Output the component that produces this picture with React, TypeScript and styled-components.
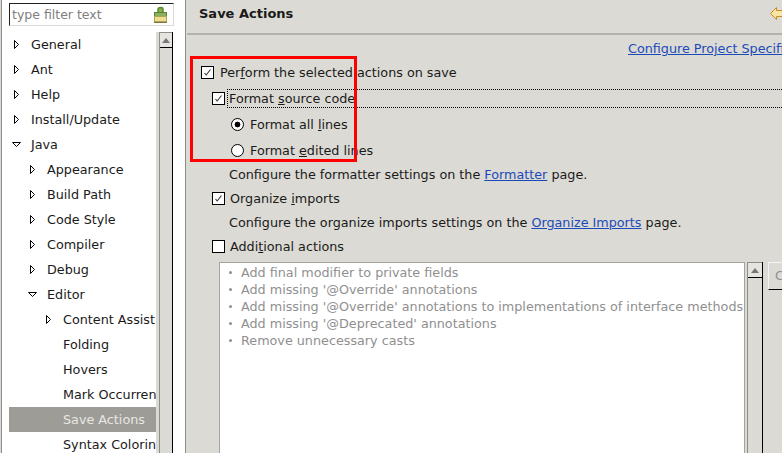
import styled, { createGlobalStyle } from 'styled-components';

const TREE_ITEMS: { label: string; level: number; arrow?: 'closed' | 'open'; selected?: boolean }[] = [
  { label: 'General', level: 0, arrow: 'closed' },
  { label: 'Ant', level: 0, arrow: 'closed' },
  { label: 'Help', level: 0, arrow: 'closed' },
  { label: 'Install/Update', level: 0, arrow: 'closed' },
  { label: 'Java', level: 0, arrow: 'open' },
  { label: 'Appearance', level: 1, arrow: 'closed' },
  { label: 'Build Path', level: 1, arrow: 'closed' },
  { label: 'Code Style', level: 1, arrow: 'closed' },
  { label: 'Compiler', level: 1, arrow: 'closed' },
  { label: 'Debug', level: 1, arrow: 'closed' },
  { label: 'Editor', level: 1, arrow: 'open' },
  { label: 'Content Assist', level: 2, arrow: 'closed' },
  { label: 'Folding', level: 2 },
  { label: 'Hovers', level: 2 },
  { label: 'Mark Occurrences', level: 2 },
  { label: 'Save Actions', level: 2, selected: true },
  { label: 'Syntax Coloring', level: 2 },
];

const ACTIONS = [
  'Add final modifier to private fields',
  "Add missing '@Override' annotations",
  "Add missing '@Override' annotations to implementations of interface methods",
  "Add missing '@Deprecated' annotations",
  'Remove unnecessary casts',
];

function TreeArrow({ open }: { open: boolean }) {
  return (
    <ArrowSvg width="10" height="10" viewBox="0 0 10 10">
      {open ? (
        <path d="M0.5 2.5H8.5L4.5 6.5Z" fill="#fff" stroke="#000" />
      ) : (
        <path d="M2.5 0.5V8.5L6.5 4.5Z" fill="#fff" stroke="#000" />
      )}
    </ArrowSvg>
  );
}

function Check() {
  return (
    <CheckBox>
      <svg width="9" height="9" viewBox="0 0 9 9">
        <path d="M1.5 5L3.2 7L7.5 1.5" fill="none" stroke="#333" strokeWidth="1.1" />
      </svg>
    </CheckBox>
  );
}

function ScrollBar() {
  return (
    <ScrollTrack>
      <ScrollButton>
        <svg width="8" height="5" viewBox="0 0 8 5">
          <path d="M0 5L4 0L8 5Z" fill="#777" />
        </svg>
      </ScrollButton>
    </ScrollTrack>
  );
}

export default function App() {
  return (
    <>
      <GlobalStyle />
      <Window>
        <Sidebar>
          <FilterBox>
            <FilterText>type filter text</FilterText>
            <svg width="15" height="18" viewBox="0 0 15 18">
              <path d="M5 6V3C5 1 10 1 10 3V6" fill="#8ab04f" stroke="#4f8a22" strokeWidth="1.4" />
              <rect x="1.5" y="6.5" width="12" height="4" fill="#8bb25a" stroke="#5e7d3a" />
              <rect x="1.5" y="10.5" width="12" height="5" fill="#efe08f" stroke="#b3a25c" />
              <path d="M1 16.5H14" stroke="#7c7440" />
            </svg>
          </FilterBox>
          <TreeArea>
            <TreeList>
              {TREE_ITEMS.map((item) => (
                <TreeRow key={item.label} $level={item.level} $selected={item.selected}>
                  <ArrowSlot>{item.arrow && <TreeArrow open={item.arrow === 'open'} />}</ArrowSlot>
                  {item.label}
                </TreeRow>
              ))}
            </TreeList>
            <SideScroll>
              <ScrollBar />
            </SideScroll>
          </TreeArea>
        </Sidebar>
        <Main>
          <Header>
            <Title>Save Actions</Title>
            <svg width="14" height="13" viewBox="0 0 14 13">
              <path d="M0.5 6.5L6.5 0.5V3.5H14V9.5H6.5V12.5Z" fill="#fbe3a4" stroke="#c98c22" />
            </svg>
          </Header>
          <Body>
            <ProjectLink>Configure Project Specific Settings...</ProjectLink>
            <TopRow>
              <Check />
              <span>
                Per<u>f</u>orm the selected actions on save
              </span>
            </TopRow>
            <NestedRow>
              <Check />
              <FocusLabel>
                Format <u>s</u>ource code
              </FocusLabel>
            </NestedRow>
            <RadioRow>
              <RadioDot $on />
              <span>
                Format all <u>l</u>ines
              </span>
            </RadioRow>
            <RadioRow>
              <RadioDot />
              <span>
                Format <u>e</u>dited lines
              </span>
            </RadioRow>
            <HintRow>
              Configure the formatter settings on the <PageLink>Formatter</PageLink> page.
            </HintRow>
            <NestedRow>
              <Check />
              <CheckLabel>
                Organize <u>i</u>mports
              </CheckLabel>
            </NestedRow>
            <HintRow>
              Configure the organize imports settings on the <PageLink>Organize Imports</PageLink> page.
            </HintRow>
            <NestedRow>
              <CheckBox />
              <CheckLabel>
                Addi<u>t</u>ional actions
              </CheckLabel>
            </NestedRow>
            <ActionsArea>
              <ActionsList>
                {ACTIONS.map((action) => (
                  <ActionItem key={action}>
                    <Bullet />
                    {action}
                  </ActionItem>
                ))}
              </ActionsList>
              <ListScroll>
                <ScrollBar />
              </ListScroll>
              <SideButton>C</SideButton>
            </ActionsArea>
          </Body>
        </Main>
        <Highlight />
      </Window>
    </>
  );
}

const GlobalStyle = createGlobalStyle`
  html, body {
    margin: 0;
    padding: 0;
    background: #dcdad5;
  }
`;

const Window = styled.div`
  position: relative;
  display: flex;
  width: 782px;
  height: 453px;
  overflow: hidden;
  background: #dcdad5;
  color: #1a1a1a;
  font-family: 'DejaVu Sans', sans-serif;
  font-size: 12.75px;
`;

const Sidebar = styled.div`
  display: flex;
  flex-direction: column;
  flex: none;
  width: 185px;
  margin-left: 1px;
  padding: 3px 0 0 7px;
  box-sizing: border-box;
  background: #fff;
  border-left: 1px solid #8f8d88;
  border-right: 1px solid #8f8d88;
`;

const FilterBox = styled.div`
  display: flex;
  align-items: center;
  justify-content: space-between;
  width: 165px;
  height: 23px;
  padding: 0 5px 0 2px;
  box-sizing: border-box;
  border: 1px solid #dcdad5;
  border-top: 1px solid #222;
  border-left: 1px solid #222;
`;

const FilterText = styled.span`
  color: #808080;
  font-size: 12.5px;
`;

const TreeArea = styled.div`
  display: flex;
  flex: 1;
  min-height: 0;
  margin-top: 6px;
  margin-right: 12px;
`;

const TreeList = styled.div`
  flex: 1;
  min-width: 0;
  overflow: hidden;
`;

const TreeRow = styled.div<{ $level: number; $selected?: boolean }>`
  display: flex;
  align-items: center;
  height: 25px;
  padding-left: ${(p) => p.$level * 16 + 3}px;
  white-space: nowrap;
  background: ${(p) => (p.$selected ? '#9d9c96' : 'transparent')};
  color: ${(p) => (p.$selected ? '#e8e7e3' : 'inherit')};
`;

const ArrowSlot = styled.span`
  display: flex;
  align-items: center;
  flex: none;
  width: 19px;
`;

const ArrowSvg = styled.svg`
  display: block;
`;

const SideScroll = styled.div`
  display: flex;
  flex: none;
  width: 17px;
  padding-left: 3px;
  box-sizing: border-box;
  background: #dcdad5;
`;

const ListScroll = styled.div`
  display: flex;
  flex: none;
  width: 16px;
  margin-left: 2px;
`;

const ScrollTrack = styled.div`
  flex: 1;
  background: #dcdad5;
  border-right: 1px solid #000;
  border-left: 1px solid #8f8d88;
`;

const ScrollButton = styled.div`
  display: flex;
  align-items: center;
  justify-content: center;
  height: 14px;
  border-top: 1px solid #8f8d88;
  border-bottom: 1px solid #000;
  background: #e6e4e0;
`;

const Main = styled.div`
  display: flex;
  flex-direction: column;
  flex: 1;
  min-width: 0;
  margin-left: 1px;
`;

const Header = styled.div`
  display: flex;
  align-items: center;
  justify-content: space-between;
  flex: none;
  height: 33px;
  padding: 0 0 6px 12px;
  box-sizing: border-box;
  margin-right: -2px;
`;

const Title = styled.h1`
  margin: 0;
  font-size: 13px;
  font-weight: 700;
`;

const Body = styled.div`
  flex: 1;
  min-height: 0;
  padding-left: 14px;
  border-top: 2px solid #b3b1ac;
`;

const ProjectLink = styled.a`
  display: block;
  height: 19px;
  margin: 5px 0 0 427px;
  color: #1a4ab8;
  text-decoration: underline;
  white-space: nowrap;
  line-height: 17px;
`;

const TopRow = styled.div`
  display: flex;
  align-items: center;
  gap: 6px;
  height: 26px;
  white-space: nowrap;
`;

const NestedRow = styled(TopRow)`
  padding-left: 11px;
  gap: 2px;
`;

const RadioRow = styled(TopRow)`
  padding-left: 30px;
`;

const HintRow = styled.div`
  height: 22px;
  padding-left: 28px;
  line-height: 24px;
  white-space: nowrap;
`;

const CheckBox = styled.span`
  display: flex;
  align-items: center;
  justify-content: center;
  flex: none;
  width: 11px;
  height: 11px;
  background: #fff;
  border: 1px solid #000;
`;

const RadioDot = styled.span<{ $on?: boolean }>`
  display: flex;
  flex: none;
  width: 13px;
  height: 13px;
  box-sizing: border-box;
  border: 1px solid #000;
  border-radius: 50%;
  background: ${(p) => (p.$on ? 'radial-gradient(circle, #000 0 2.6px, #fff 3.2px)' : '#fff')};
`;

const FocusLabel = styled.span`
  flex: 1;
  height: 19px;
  margin-right: -40px;
  padding-left: 1px;
  line-height: 18px;
  box-sizing: border-box;
  border: 1px dotted #000;
  border-right: 0;
`;

const CheckLabel = styled.span`
  padding-left: 3px;
`;

const PageLink = styled.a`
  color: #1a4ab8;
  text-decoration: underline;
`;

const ActionsArea = styled.div`
  display: flex;
  height: 191px;
  margin-top: 3px;
  padding-left: 18px;
`;

const ActionsList = styled.div`
  flex: none;
  width: 526px;
  padding: 1px 0 0 9px;
  box-sizing: border-box;
  background: #fff;
  border: 1px solid #a5a39e;
  border-bottom: 0;
  color: #8f8f8f;
`;

const ActionItem = styled.div`
  display: flex;
  align-items: center;
  gap: 9px;
  height: 17px;
  white-space: nowrap;
`;

const Bullet = styled.span`
  flex: none;
  width: 3px;
  height: 3px;
  border-radius: 50%;
  background: #8f8f8f;
`;

const SideButton = styled.div`
  flex: none;
  height: 28px;
  width: 40px;
  margin-left: 5px;
  padding-left: 6px;
  box-sizing: border-box;
  line-height: 26px;
  color: #8f8f8f;
  border-top: 1px solid #f5f4f2;
  border-left: 1px solid #f5f4f2;
  border-bottom: 1px solid #000;
`;

const Highlight = styled.div`
  position: absolute;
  left: 190px;
  top: 56px;
  width: 167px;
  height: 106px;
  box-sizing: border-box;
  border: 3px solid #f00;
  pointer-events: none;
`;
